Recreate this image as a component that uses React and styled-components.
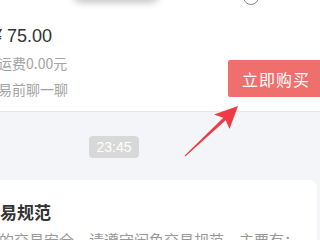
import styled, { createGlobalStyle } from 'styled-components';

const GlobalStyle = createGlobalStyle`
  html, body {
    margin: 0;
    padding: 0;
    overflow: hidden;
    background: #f4f5f8;
    font-family: "Noto Sans CJK SC", "Noto Sans", sans-serif;
  }
`;

const Frame = styled.div`
  position: relative;
  width: 320px;
  height: 240px;
  overflow: hidden;
`;

const Shell = styled.div`
  width: 362px;
  margin-left: -26px;
`;

const TopEdge = styled.div`
  display: flex;
  align-items: flex-start;
  height: 0;
  padding-left: 98px;
`;

const FloatPill = styled.div`
  width: 88px;
  height: 20px;
  margin-top: -21px;
  border-radius: 10px;
  background: #fff;
  box-shadow: 0 4px 7px rgba(0, 0, 0, 0.22);
`;

const IconRing = styled.div`
  width: 14px;
  height: 14px;
  margin-top: -11px;
  margin-left: 83px;
  border: 1.5px solid #8a8a8a;
  border-radius: 50%;
`;

const GoodsCard = styled.div`
  display: flex;
  justify-content: space-between;
  align-items: flex-end;
  padding: 24px 12px 12px 10px;
  background: #fff;
  border-bottom: 1px solid #e8e8eb;
`;

const Info = styled.div`
  display: flex;
  flex-direction: column;
`;

const PriceRow = styled.div`
  display: flex;
  align-items: baseline;
  margin-left: 8px;
  height: 24px;
  line-height: 24px;
  font-family: "Liberation Sans", Arial, sans-serif;
  color: #333;
`;

const Yen = styled.span`
  font-size: 18px;
  margin-right: 5px;
`;

const Price = styled.span`
  font-size: 18px;
`;

const SubLine = styled.div`
  font-size: 14px;
  line-height: 20px;
  color: #a3a3a3;
  margin-top: ${p => p.$gap}px;
`;

const BuyButton = styled.button`
  height: 37px;
  padding: 0 14px;
  margin-bottom: 2px;
  border: none;
  border-radius: 2px;
  background: #ef6f6c;
  color: #fff;
  font-family: inherit;
  font-size: 16px;
  letter-spacing: 1px;
`;

const ChatArea = styled.div`
  padding: 24px 0 22px 115px;
  display: flex;
`;

const TimePill = styled.div`
  width: 50px;
  height: 22px;
  border-radius: 4px;
  background: #d8d8d8;
  color: #fff;
  font-family: "Liberation Sans", Arial, sans-serif;
  font-size: 14px;
  line-height: 22px;
  text-align: center;
`;

const RuleCard = styled.div`
  margin-right: 19px;
  padding: 19px 0 0 9px;
  background: #fff;
  border-radius: 0 8px 0 0;
  height: 80px;
`;

const RuleTitle = styled.div`
  font-size: 17px;
  font-weight: 700;
  line-height: 26px;
  color: #333;
`;

const RuleText = styled.div`
  margin-top: 4px;
  margin-left: 1px;
  font-size: 15px;
  line-height: 22px;
  color: #999;
  white-space: nowrap;
`;

const Arrow = styled.svg`
  position: absolute;
  left: 0;
  top: 0;
  pointer-events: none;
`;

export default function App() {
  return (
    <Frame>
      <GlobalStyle />
      <Shell>
        <TopEdge>
          <FloatPill />
          <IconRing />
        </TopEdge>
        <GoodsCard>
          <Info>
            <PriceRow>
              <Yen>¥</Yen>
              <Price>75.00</Price>
            </PriceRow>
            <SubLine $gap={5}>含运费0.00元</SubLine>
            <SubLine $gap={6}>交易前聊一聊</SubLine>
          </Info>
          <BuyButton>立即购买</BuyButton>
        </GoodsCard>
        <ChatArea>
          <TimePill>23:45</TimePill>
        </ChatArea>
        <RuleCard>
          <RuleTitle>交易规范</RuleTitle>
          <RuleText>您的交易安全，请遵守闲鱼交易规范，主要有：</RuleText>
        </RuleCard>
      </Shell>
      <Arrow width="320" height="240" viewBox="0 0 320 240">
        <polygon
          fill="#ef3b43"
          points="238,106 214,114.5 223.3,117.7 184.7,155.6 185.3,156.4 225.7,120.3 229.5,129"
        />
      </Arrow>
    </Frame>
  );
}
